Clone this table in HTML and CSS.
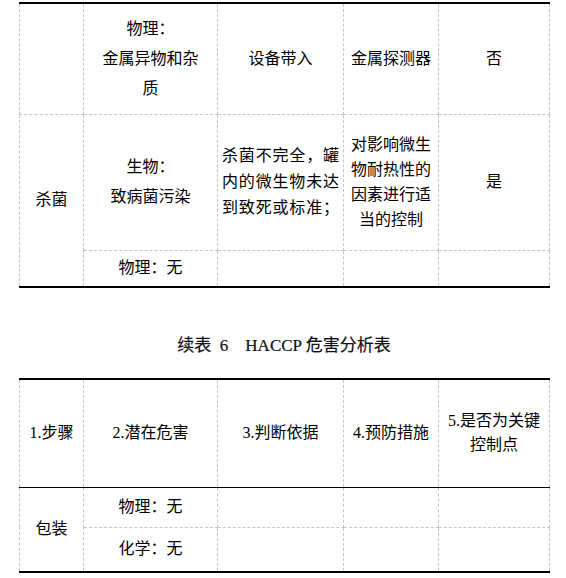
FILE: index.html
```html
<!DOCTYPE html>
<html lang="zh-CN">
<head>
<meta charset="utf-8">
<link rel="stylesheet" href="styles.css">
</head>
<body>
<div class="page">
  <table class="haccp t1">
    <colgroup>
      <col class="c1"><col class="c2"><col class="c3"><col class="c4"><col class="c5">
    </colgroup>
    <tr class="r-a">
      <td></td>
      <td class="pad-wide lh30">物理：<br>金属异物和杂质</td>
      <td>设备带入</td>
      <td>金属探测器</td>
      <td>否</td>
    </tr>
    <tr class="r-b">
      <td rowspan="2">杀菌</td>
      <td class="pad-wide lh30">生物：<br>致病菌污染</td>
      <td class="just lh26">杀菌不完全，罐内的微生物未达到致死或标准；</td>
      <td class="lh25">对影响微生物耐热性的因素进行适当的控制</td>
      <td>是</td>
    </tr>
    <tr class="r-c">
      <td class="pad-wide">物理：无</td>
      <td></td>
      <td></td>
      <td></td>
    </tr>
  </table>

  <h2 class="caption">续表  6　HACCP 危害分析表</h2>

  <table class="haccp t2">
    <colgroup>
      <col class="c1"><col class="c2"><col class="c3"><col class="c4"><col class="c5">
    </colgroup>
    <tr class="r-head">
      <td>1.步骤</td>
      <td>2.潜在危害</td>
      <td>3.判断依据</td>
      <td>4.预防措施</td>
      <td class="lh24">5.是否为关键控制点</td>
    </tr>
    <tr class="r-d">
      <td rowspan="2">包装</td>
      <td class="pad-wide">物理：无</td>
      <td></td>
      <td></td>
      <td></td>
    </tr>
    <tr class="r-e">
      <td class="pad-wide">化学：无</td>
      <td></td>
      <td></td>
      <td></td>
    </tr>
  </table>
</div>
</body>
</html>
```

FILE: styles.css
```css
html, body {
  margin: 0;
  padding: 0;
  background: #fff;
}

.page {
  padding: 2px 0 0 19px;
  font-family: "Liberation Serif", "Noto Sans CJK SC", serif;
  color: #000;
}

.haccp {
  border-collapse: collapse;
  table-layout: fixed;
  width: 530px;
  font-size: 16px;
  line-height: 22px;
}

.haccp td {
  border: 1px dashed #c6c6c6;
  padding: 0 4px;
  text-align: center;
  vertical-align: middle;
}

.haccp tr:first-child td {
  border-top: 2px solid #000;
}

.haccp tr:last-child td,
.haccp td[rowspan] {
  border-bottom: 2px solid #000;
}

.c1 { width: 64px; }
.c2 { width: 134px; }
.c3 { width: 126px; }
.c4 { width: 95px; }
.c5 { width: 111px; }

.haccp td.pad-wide {
  padding: 0 12px;
}

.lh30 { line-height: 30px; }
.lh26 { line-height: 26px; }
.lh25 { line-height: 25px; }
.lh24 { line-height: 24px; }

.haccp td.just {
  text-align: justify;
  text-align-last: justify;
}

.r-a { height: 111px; }
.r-b { height: 136px; }
.r-c { height: 37px; }

.r-head { height: 108px; }
.r-head td {
  border-bottom: 1px solid #000;
}
.r-d { height: 40px; }
.r-e { height: 45px; }

.caption {
  margin: 47px 0 0 0;
  width: 530px;
  height: 43px;
  text-align: center;
  font-size: 17px;
  line-height: 22px;
  font-weight: normal;
  color: #111;
  -webkit-text-stroke: 0.2px #111;
  white-space: pre;
}
```
